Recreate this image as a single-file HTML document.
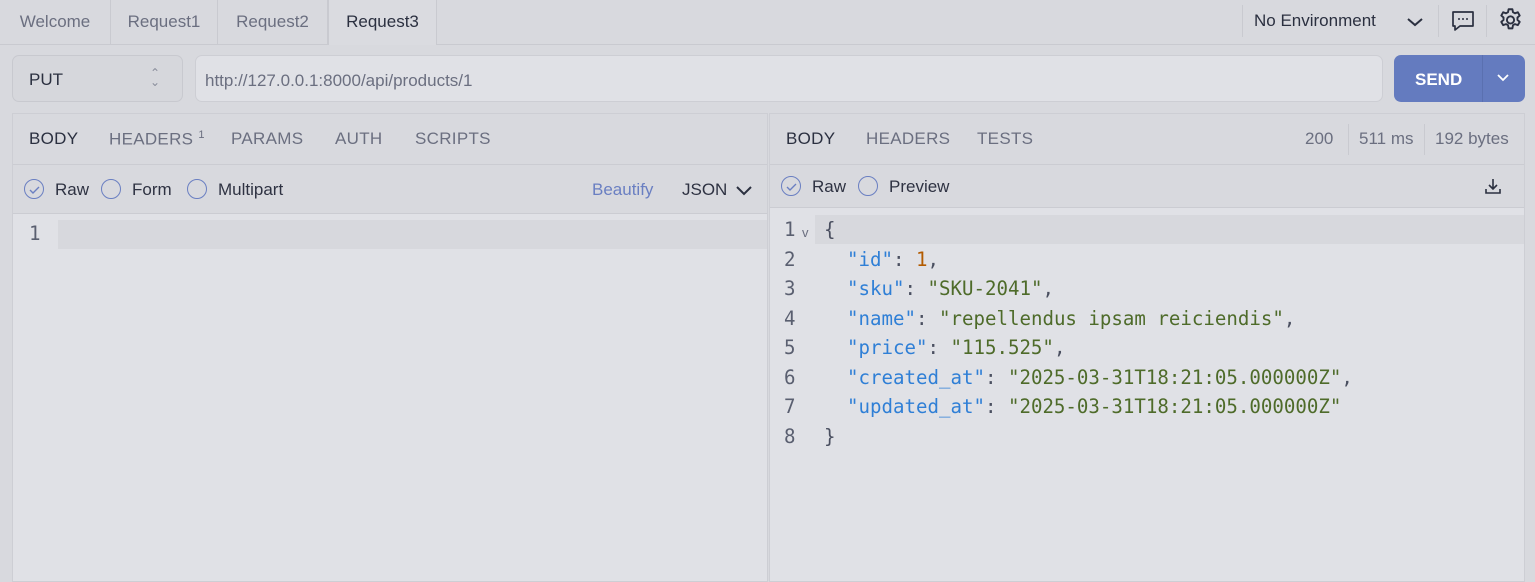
<!DOCTYPE html>
<html><head><style>
*{box-sizing:border-box;margin:0;padding:0}
body{width:1535px;height:582px;background:#d8d9de;font-family:"Liberation Sans","DejaVu Sans",sans-serif;position:relative;overflow:hidden;color:#2b3040}
.abs{position:absolute}
.tab{position:absolute;top:0;height:44px;line-height:44px;font-size:17px;color:#6b6f80;text-align:center;border-right:1px solid #c9cad0}
.panel{position:absolute;top:113px;bottom:0;background:#e0e1e6;border:1px solid #cdced4}
.hdr{position:absolute;left:0;right:0;top:0;height:51px;background:#d8d9de;border-bottom:1px solid #cbccd2}
.sub{position:absolute;left:0;right:0;top:51px;height:49px;background:#d8d9de;border-bottom:1px solid #cbccd2}
.ht{position:absolute;top:15px;font-size:17px;color:#6b6f80;letter-spacing:.3px}
.rad{position:absolute;width:20px;height:20px;border:1.5px solid #6a7fc2;border-radius:50%}
.lbl{position:absolute;font-size:17px;color:#2e3242}
.code{font-family:"DejaVu Sans Mono","Liberation Mono",monospace;font-size:19.1px;position:absolute;white-space:pre}
.k{color:#2f7fd6}.s{color:#4e6b2a}.n{color:#b35b00}.p{color:#4a4f60}
</style></head><body>
<div class="abs" style="left:0;top:44px;width:1535px;height:1px;background:#c9cad0"></div>
<div class="tab" style="left:0;width:111px">Welcome</div>
<div class="tab" style="left:111px;width:107px">Request1</div>
<div class="tab" style="left:218px;width:110px">Request2</div>
<div class="tab" style="left:328px;width:109px;color:#2b3040;background:#dadbe0;height:45px;border-left:1px solid #c9cad0">Request3</div>
<div class="abs" style="left:1242px;top:5px;width:1px;height:32px;background:#c9cad0"></div>
<div class="abs" style="left:1254px;top:11px;font-size:17px;color:#2b3040">No Environment</div>
<svg class="abs" style="left:1405px;top:12px" width="20" height="20" viewBox="0 0 20 20"><path d="M3 7l7 6 7-6" fill="none" stroke="#2b3040" stroke-width="2"/></svg>
<div class="abs" style="left:1438px;top:5px;width:1px;height:32px;background:#c9cad0"></div>
<svg class="abs" style="left:1451px;top:9px" width="24" height="24" viewBox="0 0 24 24"><path d="M2 3h20v14H9l-5 4v-4H2z" fill="none" stroke="#2b3040" stroke-width="1.7" stroke-linejoin="round"/><circle cx="8" cy="10" r="1" fill="#2b3040"/><circle cx="12" cy="10" r="1" fill="#2b3040"/><circle cx="16" cy="10" r="1" fill="#2b3040"/></svg>
<div class="abs" style="left:1486px;top:5px;width:1px;height:32px;background:#c9cad0"></div>
<svg class="abs" style="left:1497px;top:7px" width="27" height="27" viewBox="0 0 24 24"><path d="M10.3 2h3.4l.5 2.6 1.8 1 2.5-.9 1.7 2.9-2 1.7v2.2l2 1.7-1.7 2.9-2.5-.9-1.8 1-.5 2.8h-3.4l-.5-2.8-1.8-1-2.5.9-1.7-2.9 2-1.7V9.3l-2-1.7 1.7-2.9 2.5.9 1.8-1z" fill="none" stroke="#2b3040" stroke-width="1.7" stroke-linejoin="round"/><circle cx="12" cy="11.5" r="3.2" fill="none" stroke="#2b3040" stroke-width="1.7"/></svg>

<div class="abs" style="left:12px;top:55px;width:171px;height:47px;border:1px solid #c8c9cf;border-radius:7px;background:#d6d7dc"></div>
<div class="abs" style="left:29px;top:70px;font-size:17px;color:#2b3040">PUT</div>
<div class="abs" style="left:150px;top:69px;font-size:12px;color:#8a8e9c;line-height:9px">&#8963;<br>&#8964;</div>
<div class="abs" style="left:195px;top:55px;width:1188px;height:47px;border:1px solid #cdced4;border-radius:7px;background:#e0e1e6"></div>
<div class="abs" style="left:205px;top:71px;font-size:17px;color:#6b6f80">http://127.0.0.1:8000/api/products/1</div>
<div class="abs" style="left:1394px;top:55px;width:131px;height:47px;border-radius:7px;background:#647bbf"></div>
<div class="abs" style="left:1482px;top:55px;width:1px;height:47px;background:#5a70b0"></div>
<div class="abs" style="left:1415px;top:70px;font-size:17px;color:#fff;font-weight:bold">SEND</div>
<svg class="abs" style="left:1495px;top:72px" width="16" height="12" viewBox="0 0 16 12"><path d="M3 3l5 5 5-5" fill="none" stroke="#fff" stroke-width="1.8"/></svg>

<div class="panel" style="left:12px;width:756px">
 <div class="hdr">
  <div class="ht" style="left:16px;color:#2b3040">BODY</div>
  <div class="ht" style="left:96px">HEADERS <sup style="font-size:11px">1</sup></div>
  <div class="ht" style="left:218px">PARAMS</div>
  <div class="ht" style="left:322px">AUTH</div>
  <div class="ht" style="left:402px">SCRIPTS</div>
 </div>
 <div class="sub">
  <div class="rad" style="left:11px;top:14px"></div><svg class="abs" style="left:16px;top:21px" width="11" height="8"><path d="M1 4l3 3 6-6" fill="none" stroke="#6a7fc2" stroke-width="1.4"/></svg>
  <div class="lbl" style="left:42px;top:15px">Raw</div>
  <div class="rad" style="left:88px;top:14px"></div>
  <div class="lbl" style="left:119px;top:15px">Form</div>
  <div class="rad" style="left:174px;top:14px"></div>
  <div class="lbl" style="left:205px;top:15px">Multipart</div>
  <div class="lbl" style="left:579px;top:15px;color:#6a7fc2">Beautify</div>
  <div class="lbl" style="left:669px;top:15px">JSON</div>
  <svg class="abs" style="left:722px;top:19px" width="18" height="14"><path d="M2 3l7 7 7-7" fill="none" stroke="#2b3040" stroke-width="2"/></svg>
 </div>
 <div class="abs" style="left:45px;right:0;top:106px;height:29px;background:#d7d8dd"></div>
 <div class="code p" style="left:16px;top:108px;color:#5a5f70">1</div>
</div>

<div class="panel" style="left:769px;width:756px">
 <div class="hdr">
  <div class="ht" style="left:16px;color:#2b3040">BODY</div>
  <div class="ht" style="left:96px">HEADERS</div>
  <div class="ht" style="left:207px">TESTS</div>
  <div class="ht" style="left:535px;letter-spacing:0">200</div>
  <div class="abs" style="left:578px;top:10px;width:1px;height:31px;background:#c9cad0"></div>
  <div class="ht" style="left:589px;letter-spacing:0">511 ms</div>
  <div class="abs" style="left:654px;top:10px;width:1px;height:31px;background:#c9cad0"></div>
  <div class="ht" style="left:665px;letter-spacing:0">192 bytes</div>
 </div>
 <div class="sub" style="height:43px">
  <div class="rad" style="left:11px;top:11px"></div><svg class="abs" style="left:16px;top:18px" width="11" height="8"><path d="M1 4l3 3 6-6" fill="none" stroke="#6a7fc2" stroke-width="1.4"/></svg>
  <div class="lbl" style="left:42px;top:12px">Raw</div>
  <div class="rad" style="left:88px;top:11px"></div>
  <div class="lbl" style="left:119px;top:12px">Preview</div>
  <svg class="abs" style="left:713px;top:11px" width="20" height="20" viewBox="0 0 20 20"><path d="M10 3v10M6 9l4 4 4-4M3 13v4h14v-4" fill="none" stroke="#2b3040" stroke-width="1.6"/></svg>
 </div>
 <div class="abs" style="left:45px;right:0;top:101px;height:29px;background:#d7d8dd"></div>
 <div class="code" style="left:14px;top:101px;line-height:29.5px;color:#5a5f70">1
2
3
4
5
6
7
8</div>
 <div class="abs" style="left:32px;top:111px;font-size:13px;color:#6b6f80">v</div>
 <div class="code p" style="left:54px;top:101px;line-height:29.5px">{
  <span class="k">"id"</span>: <span class="n">1</span>,
  <span class="k">"sku"</span>: <span class="s">"SKU-2041"</span>,
  <span class="k">"name"</span>: <span class="s">"repellendus ipsam reiciendis"</span>,
  <span class="k">"price"</span>: <span class="s">"115.525"</span>,
  <span class="k">"created_at"</span>: <span class="s">"2025-03-31T18:21:05.000000Z"</span>,
  <span class="k">"updated_at"</span>: <span class="s">"2025-03-31T18:21:05.000000Z"</span>
}</div>
</div>
</body></html>
